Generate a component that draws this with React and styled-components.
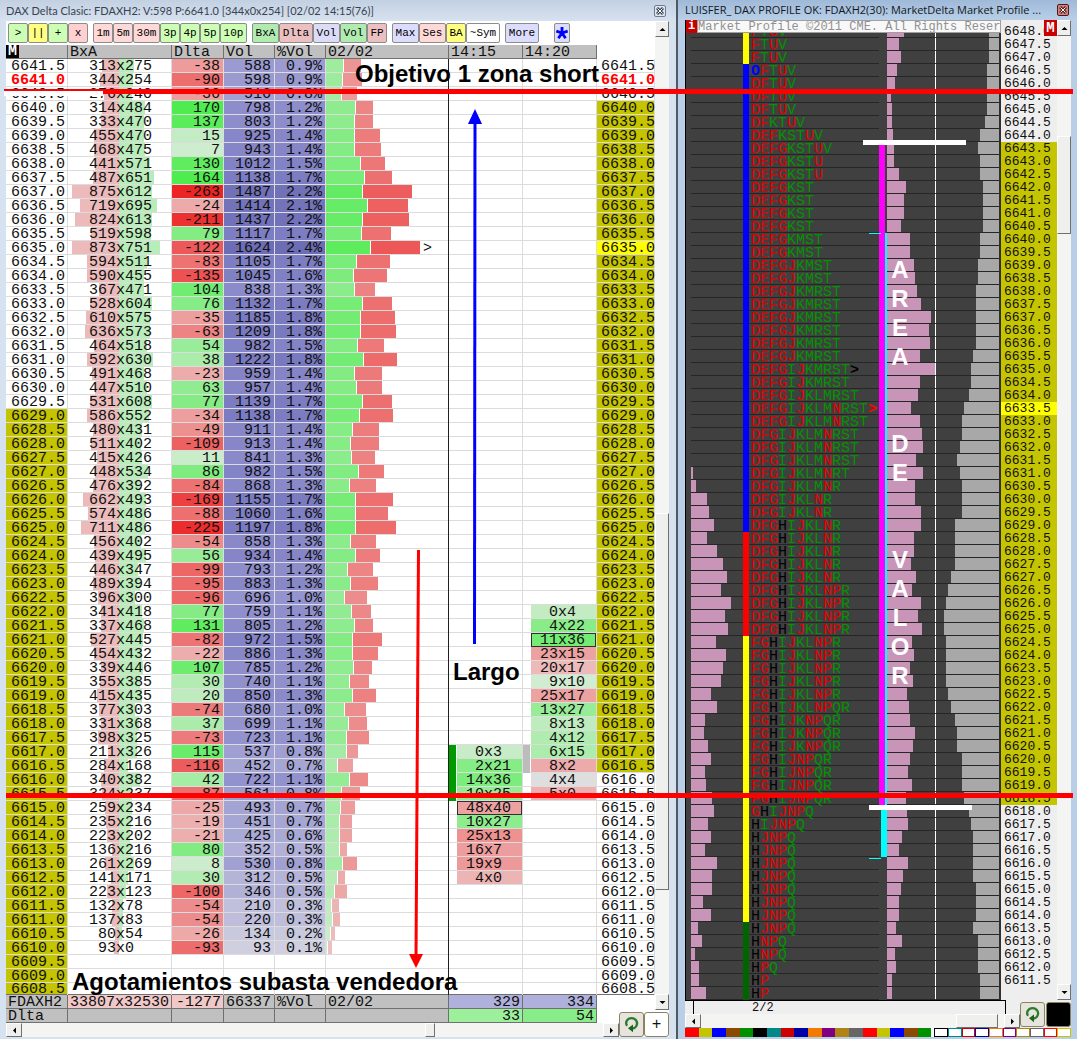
import React from 'react'
import styled, { createGlobalStyle } from 'styled-components'


const GlobalStyle = createGlobalStyle`
    * {
        box-sizing: border-box;
    }
    body {
        margin: 0;
        background: #b9cfe8;
    }
    button {
        margin: 0;
        padding: 0;
        font: inherit;
        color: inherit;
    }
`

const mono = '"Liberation Mono", "Courier New", monospace'
const olive = '#c4c400'

// price ladder, bid x ask, top price first
const LADDER_TOP = 6641.5
const TRADES = [
    [313, 275], [344, 254], [276, 240], [314, 484], [333, 470], [455, 470], [468, 475], [441, 571],
    [487, 651], [875, 612], [719, 695], [824, 613], [519, 598], [873, 751], [594, 511], [590, 455],
    [367, 471], [528, 604], [610, 575], [636, 573], [464, 518], [592, 630], [491, 468], [447, 510],
    [531, 608], [586, 552], [480, 431], [511, 402], [415, 426], [448, 534], [476, 392], [662, 493],
    [574, 486], [711, 486], [456, 402], [439, 495], [446, 347], [489, 394], [396, 300], [341, 418],
    [337, 468], [527, 445], [454, 432], [339, 446], [355, 385], [415, 435], [377, 303], [331, 368],
    [398, 325], [211, 326], [284, 168], [340, 382], [324, 237], [259, 234], [235, 216], [223, 202],
    [136, 216], [261, 269], [141, 171], [223, 123], [132, 78], [137, 83], [80, 54], [93, 0],
    null, null, null,
]
const TOTAL_VOLUME = 66337

// five minute footprints: first row they start on, then bid x ask
const FOOTPRINTS = [
    {
        start: 49, box: 53, strip: '#009a00', stripRows: 4,
        cells: [[0, 3], [2, 21], [14, 36], [10, 25], [48, 40], [10, 27], [25, 13], [16, 7], [19, 9], [4, 0]],
    },
    {
        start: 39, box: 41, strip: '#bcbcbc', stripRows: 2, stripStart: 49,
        cells: [[0, 4], [4, 22], [11, 36], [23, 15], [20, 17], [9, 10], [25, 17], [13, 27], [8, 13], [4, 12], [6, 15], [8, 2], [4, 4], [5, 0]],
    },
]

// letters, left histogram, middle histogram, right histogram
const PROFILE_TOP = 6648
const PROFILE = [
    ['FTUV', 0, 18, 10], ['FTUV', 0, 13, 10], ['FTUV', 0, 15, 10], ['OFTUV', 0, 11, 12],
    ['DFTUV', 0, 9, 12], ['DFTUV', 0, 5, 12], ['DFTUV', 0, 6, 12], ['DFKTUV', 0, 6, 14],
    ['DEFKSTUV', 0, 7, 19], ['DEFGKSTUV', 0, 8, 21], ['DEFGKSTU', 0, 8, 19], ['DEFGKSTU', 0, 13, 19],
    ['DEFGKST', 0, 20, 16], ['DEFGKST', 0, 18, 16], ['DEFGKST', 0, 18, 16], ['DEFGKST', 0, 15, 16],
    ['DEFGKMST', 0, 24, 19], ['DEFGKMST', 0, 24, 19], ['DEFGJKMST', 0, 28, 21], ['DEFGJKMST', 0, 29, 21],
    ['DEFGJKMRST', 0, 31, 23], ['DEFGJKMRST', 0, 35, 23], ['DEFGJKMRST', 0, 45, 23], ['DEFGJKMRST', 0, 43, 23],
    ['DEFGJKMRST', 0, 44, 23], ['DEFGJKMRST', 0, 34, 26], ['DEFGIJKMRST', 0, 50, 28], ['DEFGIJKMRST', 0, 34, 28],
    ['DEFGIJKLMRST', 0, 32, 30], ['DEFGIJKLMNRST', 0, 25, 35], ['DEFGIJKLMNRST', 0, 34, 37], ['DFGIJKLMNRST', 0, 36, 37],
    ['DFGIJKLMNRST', 0, 37, 39], ['DFGIJKLMNRST', 0, 30, 42], ['DFGIJKLMNRT', 2, 37, 39], ['DFGIJKLMNR', 5, 29, 37],
    ['DFGIJKLNR', 16, 29, 37], ['DFGIJKLNR', 18, 35, 37], ['DFGHIJKLNR', 23, 35, 44], ['DFGHIJKLNR', 16, 28, 44],
    ['DFGHIJKLNR', 26, 28, 44], ['DFGHIJKLNR', 32, 25, 44], ['DFGHIJKLNR', 36, 30, 48], ['DFGHIJKLNPR', 30, 26, 51],
    ['DFGHIJKLNPR', 40, 35, 53], ['DFGHIJKLNPR', 34, 32, 55], ['DFGHIJKLNPR', 37, 36, 55], ['FGHIJKLNPR', 25, 26, 53],
    ['FGHIJKLNPR', 35, 28, 53], ['FGHIJKLNPR', 32, 24, 53], ['FGHIJKLNPR', 30, 27, 53], ['FGHIJKLNPR', 20, 21, 51],
    ['FGHIJKLNPQR', 26, 23, 48], ['FGHIJKNPQR', 14, 24, 44], ['FGHIJKNPQR', 13, 29, 42], ['FGHIJKNPQR', 17, 27, 42],
    ['FGHIJNPQR', 20, 24, 37], ['FGHIJNPQR', 14, 22, 37], ['FGHIJNPQR', 15, 26, 37], ['FGHIJNPQR', 21, 20, 35],
    ['GHIJNPQ', 23, 21, 30], ['HIJNPQ', 17, 22, 28], ['HJNPQ', 20, 16, 26], ['HJNPQ', 14, 13, 26],
    ['HJNPQ', 26, 22, 26], ['HJNPQ', 21, 17, 26], ['HJNPQ', 21, 15, 23], ['HJNPQ', 12, 13, 23],
    ['HJNPQ', 20, 13, 23], ['HJNPQ', 7, 10, 26], ['HNPQ', 11, 16, 21], ['HNPQ', 4, 9, 21],
    ['HPQ', 8, 10, 21], ['HP', 8, 6, 19], ['HP', 15, 6, 19],
]

const TOOLBAR = [
    [['>', '#ccffb4'], ['||', '#ffff80'], ['+', '#ccffb4'], ['x', '#ffd0d0']],
    [['1m', '#ffd8d8'], ['5m', '#ffd8d8'], ['30m', '#ffd8d8'], ['3p', '#ccffb4'], ['4p', '#ccffb4'], ['5p', '#ccffb4'], ['10p', '#ccffb4']],
    [['BxA', '#b0ecb0'], ['Dlta', '#ecc0c0'], ['Vol', '#dcdcf8'], ['Vol', '#b0ecb0'], ['FP', '#ecc0c0']],
    [['Max', '#dcdcfc'], ['Ses', '#ffd8d8'], ['BA', '#ffff80'], ['~Sym', '#ffffff']],
    [['More', '#dcdcfc']],
]

const SWATCHES = [
    '#ff0000', '#c4c400', '#0000ff', '#8a4a00', '#009000', '#000000', '#008888', '#cc0000', '#0000a8',
    '#f47a00', '#800080', '#b08414', '#666666', '#ff0000', '#c4c400', '#0000ff', '#8a4a00', '#009000',
]
const OUTLINES = [
    '#000000', '#008888', '#cc0000', '#0000a8', '#f47a00', '#800080', '#b08414', '#666666', '#ff0000', '#c4c400',
]

// colour scales
const greenFor = n => {
    const c = Math.round(Math.max(78, 215 * Math.exp(-n / 160)))
    return `rgb(${c}, 236, ${c})`
}
const redFor = n => {
    const c = Math.round(Math.max(36, 200 * Math.exp(-n / 150)))
    return `rgb(237, ${c}, ${c})`
}
const deltaColor = d => {
    if (d === 0) return '#dedede'
    return d > 0 ? greenFor(d) : redFor(-d)
}
const volumeColor = v => {
    const c = Math.round(90 + 130 * Math.exp(-v / 850))
    return `rgb(${c}, ${c}, ${Math.round(226 - v * .028)})`
}
const letterColor = l => {
    if (l === 'H') return '#000'
    if (l === 'O') return '#0000ff'
    return 'DEFGJNPU'.includes(l) ? '#e00000' : '#009400'
}


const Page = styled.main`
    position: relative;
    display: grid;
    grid-template-columns: 678fr 399fr;
    min-height: 100vh;
    overflow: hidden;
    font-family: ${mono};
    color: #101010;
`

const Window = styled.section`
    position: relative;
    display: flex;
    flex-direction: column;
    min-width: 0;
    padding: ${props => props.$active ? '0 6px 2px 7px' : '0 7px 2px 6px'};
    background: ${props => props.$active ? '#b9cfe8' : '#d7e2f0'};
    border-right: ${props => props.$active ? 'none' : '2px solid #505862'};
`

const TitleBar = styled.header`
    display: flex;
    align-items: center;
    justify-content: space-between;
    height: ${props => props.$active ? '20px' : '21px'};
    margin: ${props => props.$active ? '0 -6px 0 -7px' : '0 -7px 0 -6px'};
    padding: ${props => props.$active ? '0 8px 0 7px' : '0 10px 0 6px'};
    background: ${props => props.$active
        ? 'linear-gradient(#9fb9d8, #b9cfe8)'
        : 'linear-gradient(#c2d0e2, #d7e2f0)'};
    h1 {
        margin: 0;
        font-family: ${props => props.$active ? '"Open Sans", sans-serif' : 'Lato, sans-serif'};
        font-size: 11px;
        font-weight: 400;
        line-height: 20px;
        white-space: nowrap;
        color: ${props => props.$active ? '#101820' : '#3a424e'};
    }
`

const CloseButton = styled.button`
    display: flex;
    flex: none;
    align-items: center;
    justify-content: center;
    width: 12px;
    height: 12px;
    border: 1px solid ${props => props.$active ? '#5a1414' : '#6e7c8e'};
    border-radius: 2px;
    background: ${props => props.$active ? '#d08484' : '#dce6f2'};
`

const Body = styled.div`
    display: flex;
    flex: 1;
    min-height: 0;
    background: #fff;
`

const Content = styled.div`
    flex: 1;
    min-width: 0;
`

const Toolbar = styled.div`
    display: flex;
    gap: 5px;
    height: 24px;
    padding: 2px 2px 0;
`

const ButtonGroup = styled.div`
    display: flex;
    &:last-child {
        margin-left: 10px;
    }
`

const ToolButton = styled.button`
    width: ${props => props.$chars < 3 ? 20 : props.$chars * 7 + 6}px;
    height: 20px;
    border: 1px solid #8c8c8c;
    border-radius: 2px;
    background: ${props => props.$color};
    font-size: 11px;
    line-height: 16px;
    color: #000;
`

const StarButton = styled(ToolButton)`
    display: flex;
    align-items: center;
    justify-content: center;
    width: 16px;
`

const Ladder = styled.table`
    width: 100%;
    table-layout: fixed;
    border-collapse: separate;
    border-spacing: 0;
    font-size: 15px;
    line-height: 12px;
    white-space: pre;
    th, td {
        height: 14px;
        padding: 2px 0 0;
        font-weight: 400;
        text-align: left;
        vertical-align: top;
        box-shadow: inset 0 -1px #dcdcdc;
    }
    thead th, tfoot td {
        padding-left: 2px;
        background: #c0c0c0;
        border-right: 1px solid #707070;
        box-shadow: inset 0 -1px #707070;
    }
    thead th:first-child {
        padding: 0;
    }
    thead th:last-child, tfoot td:last-child {
        background: #fff;
        border: none;
        box-shadow: none;
    }
    tbody tr:last-child td {
        height: 12px;
        line-height: 10px;
        box-shadow: inset 0 -1px #707070;
    }
`

const Marker = styled.span`
    display: block;
    width: 13px;
    height: 13px;
    background: #000;
    color: #fff;
    font-weight: 700;
    line-height: 14px;
    text-align: center;
`

const PriceCell = styled.td`
    && {
        padding-left: ${props => props.$right ? 4 : 5}px;
        background: ${props => props.$fill};
        border-right: 1px solid #dcdcdc;
        color: ${props => props.$last ? '#ff0000' : 'inherit'};
        font-weight: ${props => props.$last ? 700 : 400};
    }
`

const BidAskCell = styled.td`
    && {
        padding: 0;
        border-right: 1px solid #dcdcdc;
    }
`

const BidAsk = styled.div`
    display: grid;
    grid-template-columns: 51px 52px;
    i, span {
        grid-row: 1;
    }
    i {
        height: 13px;
    }
    span {
        grid-column: 1 / 3;
        padding: 2px 0 0 21px;
    }
`

const BidBar = styled.i`
    grid-column: 1;
    justify-self: end;
    background: #ecbaba;
`

const AskBar = styled.i`
    grid-column: 2;
    background: #b8ecb8;
`

const NumberCell = styled.td`
    && {
        padding-right: 3px;
        text-align: right;
        background: ${props => props.$fill};
        border-right: 1px solid #dcdcdc;
    }
`

const VolumeCell = styled.td`
    && {
        padding: 0;
        border-right: 1px solid #202020;
    }
`

const VolumeBars = styled.div`
    display: flex;
    height: 14px;
    i {
        flex: none;
        height: 13px;
        border-right: 1px solid #fff;
    }
    span {
        padding: 2px 0 0 2px;
    }
`

const FootprintCell = styled.td`
    && {
        padding: 0;
        border-right: 1px solid #dcdcdc;
    }
    > div {
        display: grid;
        grid-template-columns: 7px 1fr;
        height: 14px;
    }
`

const Strip = styled.i`
    background: ${props => props.$color || 'transparent'};
`

const Footprint = styled.span`
    margin-left: 1px;
    padding: 2px 0 0 9px;
    background: ${props => props.$fill};
    box-shadow: ${props => props.$boxed ? 'inset 0 0 0 1px #303030' : 'inset 0 -1px #dcdcdc'};
`

const SummaryCell = styled.td`
    && {
        padding-right: 2px;
        text-align: ${props => props.$align || 'left'};
        background: ${props => props.$fill};
    }
`

const ScrollTrack = styled.div`
    display: flex;
    flex: ${props => props.$vertical ? 'none' : 1};
    flex-direction: ${props => props.$vertical ? 'column' : 'row'};
    justify-content: space-between;
    width: ${props => props.$vertical ? '14px' : 'auto'};
    height: ${props => props.$vertical ? 'auto' : '14px'};
    background: #f4f4f3;
`

const ScrollArrow = styled.button`
    display: flex;
    flex: none;
    align-items: center;
    justify-content: center;
    width: ${props => props.$vertical ? 14 : 16}px;
    height: ${props => props.$vertical ? 16 : 14}px;
    border: 1px solid;
    border-color: #fff #707070 #707070 #fff;
    background: #efefee;
`

const ScrollThumb = styled.div`
    flex: none;
    border: 1px solid;
    border-color: #fff #707070 #707070 #fff;
    background: #efefee;
`

const ScrollSide = styled.div`
    display: flex;
    padding-bottom: 13px;
`

const Spacer = styled.div`
    flex: ${props => props.$grow};
`

const BottomBar = styled.footer`
    display: flex;
    align-items: flex-end;
    height: 14px;
    background: #fff;
`

const CornerButton = styled.button`
    position: relative;
    display: flex;
    flex: none;
    align-items: center;
    justify-content: center;
    width: 25px;
    height: 25px;
    border: 1px solid #8c8460;
    border-radius: 3px;
    background: ${props => props.$color || '#e6e4dc'};
`

const Chart = styled.div`
    position: relative;
    flex: 1;
    min-width: 0;
    padding-top: 5px;
    background: linear-gradient(to left, #eee 56px, #404040 56px);
    border-left: 1px solid #000;
`

const ProfileRow = styled.div`
    display: grid;
    grid-template-columns: 52px 6px 2px 1fr 8px 48px 1px 63px 2px 56px;
    height: 13px;
    padding-left: 5px;
    font-size: 15px;
    line-height: 12px;
    white-space: nowrap;
`

const Lane = styled.div`
    display: flex;
    justify-content: ${props => props.$end ? 'flex-end' : 'flex-start'};
    min-width: 0;
    height: 13px;
    border-bottom: 1px solid #262626;
`

const Bar = styled.i`
    flex: none;
    background: ${props => props.$gray ? '#a8a8a8' : '#c894b8'};
`

const SessionBar = styled.i`
    background: ${props => props.$color};
`

const Letter = styled.b`
    width: 9px;
    padding-top: 2px;
    font-weight: ${props => props.$strong ? 700 : 400};
    color: ${props => props.$color};
`

const RangeBar = styled.i`
    background: ${props => props.$fill};
`

const Divider = styled.i`
    background: ${props => props.$color};
    margin-bottom: ${props => props.$dashed ? '1px' : 0};
`

const ProfilePrice = styled.div`
    padding-left: 3px;
    background: ${props => props.$fill};
    font-size: 13px;
    line-height: 13px;
`

const Notice = styled.div`
    position: absolute;
    top: 0;
    left: 0;
    right: 57px;
    display: flex;
    height: 13px;
    font-size: 12px;
    line-height: 13px;
    white-space: nowrap;
    color: #909090;
    strong {
        flex: none;
        width: 11px;
        background: #c80000;
        color: #fff;
        text-align: center;
    }
    span {
        flex: 1;
        background: #f8f8f8;
        border: 1px solid #a0a0a0;
        line-height: 12px;
    }
`

const Badge = styled.strong`
    position: absolute;
    top: 0;
    right: 0;
    width: 13px;
    background: #c80000;
    color: #fff;
    font-size: 14px;
    line-height: 16px;
    text-align: center;
`

const Axis = styled.div`
    flex: 1;
    height: 14px;
    margin-right: 14px;
    padding-left: 67px;
    background: linear-gradient(to right, #eee 8px, #000 8px, #000 9px, #eee 9px);
    border-top: 1px solid #000;
    border-right: 1px solid #000;
    font-size: 12px;
    line-height: 14px;
`

const ChartFooter = styled.div`
    display: flex;
    align-items: flex-start;
    background: #eee;
    > div:first-child {
        flex: 1;
        min-width: 0;
    }
`

const CornerButtons = styled.div`
    display: flex;
    gap: 1px;
    padding-top: 2px;
`

const Palette = styled.div`
    display: grid;
    grid-template-columns: repeat(18, 14fr) 3fr repeat(10, 14fr);
    height: 9px;
`

const Swatch = styled.i`
    background: ${props => props.$fill};
    border: ${props => props.$line ? `1px solid ${props.$line}` : 'none'};
`

// drawn over both windows
const Level = styled.i`
    position: absolute;
    left: ${props => props.$left}px;
    right: 4px;
    top: ${props => props.$top}px;
    height: 5px;
    background: #ff0000;
`

const LevelStart = styled.i`
    position: absolute;
    left: 4px;
    top: 89px;
    width: 99px;
    height: 7px;
    background: #ff0000;
    border-bottom: 5px solid #fff;
`

const Arrow = styled.svg`
    position: absolute;
    left: ${props => props.$left}px;
    top: ${props => props.$top}px;
`

const Note = styled.p`
    position: absolute;
    left: ${props => props.$left}px;
    top: ${props => props.$top}px;
    margin: 0;
    font-family: "Liberation Sans", Arial, sans-serif;
    font-size: 24px;
    font-weight: 700;
    line-height: 28px;
    white-space: nowrap;
    color: #000;
`

const AreaText = styled.p`
    position: absolute;
    right: 145px;
    top: 235px;
    width: 24px;
    margin: 0;
    font-family: "Liberation Sans", Arial, sans-serif;
    font-size: 24px;
    font-weight: 700;
    line-height: 29px;
    text-align: center;
    color: #fff;
    span {
        display: block;
        height: 29px;
    }
`

const AreaLimit = styled.i`
    position: absolute;
    right: ${props => props.$right}px;
    top: ${props => props.$top}px;
    width: 103px;
    height: 5px;
    background: #fff;
`

const Tick = styled.i`
    position: absolute;
    right: 176px;
    top: ${props => props.$top}px;
    width: 12px;
    height: 1px;
    background: #00ffff;
`


const Triangle = ({ rotate }) => (
    <svg width='7' height='7' viewBox='0 0 7 7' aria-hidden='true'>
        <path d='M0.5 5 L3.5 2 L6.5 5 Z' fill='#000' transform={`rotate(${rotate} 3.5 3.5)`} />
    </svg>
)

const RefreshIcon = () => (
    <svg width='17' height='17' viewBox='0 0 15 15' fill='none' aria-hidden='true'>
        <path d='M3.6 8.6 C1.4 5.4 4 1.8 7.5 1.8 C11.2 1.8 13.6 5.6 11.8 8.8 C11 10.2 9.8 11 8.2 11' stroke='#2c7a2c' strokeWidth='2' />
        <path d='M8.8 7.4 V14.4 L4.4 10.9 Z' fill='#1c641c' />
    </svg>
)

const CloseIcon = ({ active }) => (
    <svg width='8' height='8' viewBox='0 0 8 8' aria-hidden='true'>
        <path d='M1 1 L7 7 M7 1 L1 7' stroke={active ? '#5a2020' : '#384250'} strokeWidth='3' />
        <path d='M1.4 1.4 L6.6 6.6 M6.6 1.4 L1.4 6.6' stroke='#fff' strokeWidth='1' />
    </svg>
)

function Title({ text, active }) {
    return (
        <TitleBar $active={active}>
            <h1>{text}</h1>
            <CloseButton type='button' aria-label='Close' $active={active}><CloseIcon active={active} /></CloseButton>
        </TitleBar>
    )
}

function Scroll({ vertical, before, after, size }) {
    const thumb = vertical ? { height: size } : { width: size }
    return (
        <ScrollTrack $vertical={vertical}>
            <ScrollArrow type='button' aria-label={vertical ? 'Scroll up' : 'Scroll left'} $vertical={vertical}>
                <Triangle rotate={vertical ? 0 : -90} />
            </ScrollArrow>
            <Spacer $grow={before} />
            <ScrollThumb style={thumb} />
            <Spacer $grow={after} />
            <ScrollArrow type='button' aria-label={vertical ? 'Scroll down' : 'Scroll right'} $vertical={vertical}>
                <Triangle rotate={vertical ? 180 : 90} />
            </ScrollArrow>
        </ScrollTrack>
    )
}

function FootprintColumn({ data, row }) {
    const trade = data.cells[row - data.start]
    const first = data.stripStart || data.start
    const hasStrip = row >= first && row < first + data.stripRows
    return (
        <FootprintCell>
            {trade &&
                <div>
                    <Strip $color={hasStrip ? data.strip : undefined} />
                    <Footprint $fill={deltaColor((trade[1] - trade[0]) * 4)} $boxed={row === data.box}>
                        {`${String(trade[0]).padStart(2)}x${trade[1]}`}
                    </Footprint>
                </div>
            }
        </FootprintCell>
    )
}

function LadderRow({ trade, row }) {
    const price = (LADDER_TOP - row / 2).toFixed(1)
    const isLast = row === 1
    let rightFill = row > 2 && row < 51 ? olive : '#fff'
    if (row === 13) rightFill = '#ffff00'

    const [bid, ask] = trade || [0, 0]
    const volume = bid + ask
    return (
        <tr>
            <PriceCell $fill={row > 24 ? olive : '#fff'} $last={isLast}>{price}</PriceCell>
            <BidAskCell>
                {trade &&
                    <BidAsk>
                        <BidBar style={{ width: Math.round(bid * .054) }} />
                        <AskBar style={{ width: Math.round(ask * .054) }} />
                        <span>{`${String(bid).padStart(3)}x${ask}`}</span>
                    </BidAsk>
                }
            </BidAskCell>
            <NumberCell $fill={trade ? deltaColor(ask - bid) : '#fff'}>{trade && ask - bid}</NumberCell>
            <NumberCell $fill={trade ? volumeColor(volume) : '#fff'}>{trade && volume}</NumberCell>
            <NumberCell $fill={trade ? volumeColor(volume) : '#fff'}>
                {trade && `${(volume / TOTAL_VOLUME * 100).toFixed(1)}%`}
            </NumberCell>
            <VolumeCell>
                {trade &&
                    <VolumeBars>
                        <i style={{ width: Math.round(ask * .0572) + 2, background: greenFor(volume / 12) }} />
                        <i style={{ width: Math.round(bid * .0572), background: redFor(volume / 13) }} />
                        {row === 13 && <span>&gt;</span>}
                    </VolumeBars>
                }
            </VolumeCell>
            <FootprintColumn data={FOOTPRINTS[0]} row={row} />
            <FootprintColumn data={FOOTPRINTS[1]} row={row} />
            <PriceCell $right $fill={rightFill} $last={isLast}>{price}</PriceCell>
        </tr>
    )
}

function DeltaWindow() {
    return (
        <Window>
            <Title text='DAX Delta Clasic: FDAXH2: V:598 P:6641.0 [344x0x254] [02/02 14:15(76)]' />
            <Body>
                <Content>
                    <Toolbar>
                        {TOOLBAR.map((group, i) => (
                            <ButtonGroup key={i}>
                                {group.map(([label, color], j) => (
                                    <ToolButton key={j} type='button' $chars={label.length} $color={color}>{label}</ToolButton>
                                ))}
                            </ButtonGroup>
                        ))}
                        <ButtonGroup>
                            <StarButton type='button' aria-label='Favourites' $color='#dcdcfc'>
                                <svg width='14' height='14' viewBox='0 0 14 14' aria-hidden='true'>
                                    <path d='M7 7 V1 M7 7 L1.3 5.2 M7 7 L12.7 5.2 M7 7 L3.4 12.2 M7 7 L10.6 12.2' stroke='#0000ff' strokeWidth='2.8' />
                                </svg>
                            </StarButton>
                        </ButtonGroup>
                    </Toolbar>
                    <Ladder>
                        <colgroup>
                            <col width='62' />
                            <col width='104' />
                            <col width='52' />
                            <col width='51' />
                            <col width='51' />
                            <col />
                            <col width='74' />
                            <col width='74' />
                            <col width='58' />
                        </colgroup>
                        <thead>
                            <tr>
                                <th><Marker>M</Marker></th>
                                <th>BxA</th>
                                <th>Dlta</th>
                                <th>Vol</th>
                                <th>%Vol</th>
                                <th>02/02</th>
                                <th>14:15</th>
                                <th>14:20</th>
                                <th></th>
                            </tr>
                        </thead>
                        <tbody>
                            {TRADES.map((trade, row) => <LadderRow key={row} trade={trade} row={row} />)}
                        </tbody>
                        <tfoot>
                            <tr>
                                <td>FDAXH2</td>
                                <SummaryCell $fill='#f0c8c8'>33807x32530</SummaryCell>
                                <SummaryCell $fill='#f0c8c8' $align='right'>-1277</SummaryCell>
                                <td>66337</td>
                                <td>%Vol</td>
                                <td>02/02</td>
                                <SummaryCell $fill='#b0b0dc' $align='right'>329</SummaryCell>
                                <SummaryCell $fill='#b0b0dc' $align='right'>334</SummaryCell>
                                <td></td>
                            </tr>
                            <tr>
                                <td>Dlta</td>
                                <td></td>
                                <td></td>
                                <td></td>
                                <td></td>
                                <td></td>
                                <SummaryCell $fill='#9cf09c' $align='right'>33</SummaryCell>
                                <SummaryCell $fill='#88ec88' $align='right'>54</SummaryCell>
                                <td></td>
                            </tr>
                        </tfoot>
                    </Ladder>
                </Content>
                <ScrollSide>
                    <Scroll vertical before={476} after={104} size={377} />
                </ScrollSide>
            </Body>
            <BottomBar>
                <Scroll before={402} after={168} size={10} />
                <CornerButton type='button' aria-label='Refresh'><RefreshIcon /></CornerButton>
                <CornerButton type='button' aria-label='Add' $color='#fff'>+</CornerButton>
            </BottomBar>
        </Window>
    )
}

// colour of the session strip next to the letters
const sessionColor = row => {
    if (row < 3) return '#ffff00'
    if (row < 39) return '#0000ff'
    if (row < 47) return '#ff0000'
    return row < 69 ? '#ffff00' : '#006400'
}

const rangeFill = row => {
    if (row < 9 || row > 63) return 'transparent'
    if (row < 16) return 'linear-gradient(to right, #ff00ff 6px, #404040 6px)'
    if (row < 60) return 'linear-gradient(to right, #ff00ff 6px, #00ffff 6px)'
    return 'linear-gradient(to right, #404040 2px, #00ffff 2px)'
}

function ProfileLine({ data, row }) {
    const [letters, left, middle, right] = data
    let fill = row > 8 && row < 60 ? olive : '#eee'
    if (row === 29) fill = '#ffff00'
    return (
        <ProfileRow>
            <Lane><Bar style={{ width: left }} /></Lane>
            <SessionBar $color={sessionColor(row)} />
            <Lane />
            <Lane>
                {letters.split('').map(l => (
                    <Letter key={l} $color={letterColor(l)} $strong={l === 'O'}>{l}</Letter>
                ))}
                {row === 26 && <Letter $color='#000' $strong>&gt;</Letter>}
                {row === 29 && <Letter $color='#ff0000' $strong>&gt;</Letter>}
            </Lane>
            <RangeBar $fill={rangeFill(row)} />
            <Lane><Bar style={{ width: middle - 1 }} /></Lane>
            <Divider $color='#fff' $dashed />
            <Lane $end><Bar $gray style={{ width: right }} /></Lane>
            <Divider $color='#303030' />
            <ProfilePrice $fill={fill}>{row < 74 && (PROFILE_TOP - row / 2).toFixed(1)}</ProfilePrice>
        </ProfileRow>
    )
}

function ProfileWindow() {
    return (
        <Window $active>
            <Title active text='LUISFER_ DAX PROFILE OK: FDAXH2(30): MarketDelta Market Profile ...' />
            <Body>
                <Chart>
                    {PROFILE.map((data, row) => <ProfileLine key={row} data={data} row={row} />)}
                    <Notice>
                        <strong>i</strong>
                        <span>Market Profile ©2011 CME. All Rights Reser</span>
                    </Notice>
                    <Badge>M</Badge>
                    <Tick $top={213} />
                    <Tick $top={838} />
                    <AreaLimit $right={91} $top={120} />
                    <AreaLimit $right={85} $top={785} />
                    <AreaText>
                        {'AREA  DE  VALOR'.split('').map((l, i) => <span key={i}>{l}</span>)}
                    </AreaText>
                </Chart>
                <Scroll vertical before={100} after={752} size={98} />
            </Body>
            <ChartFooter>
                <div>
                    <Axis>2/2</Axis>
                    <Scroll before={256} after={6} size={42} />
                </div>
                <CornerButtons>
                    <CornerButton type='button' aria-label='Refresh'><RefreshIcon /></CornerButton>
                    <CornerButton type='button' aria-label='Background' $color='#000' />
                </CornerButtons>
            </ChartFooter>
            <Palette>
                {SWATCHES.map((color, i) => <Swatch key={i} $fill={color} />)}
                <Swatch $fill='#fff' />
                {OUTLINES.map((color, i) => <Swatch key={i} $fill='#fff' $line={color} />)}
            </Palette>
        </Window>
    )
}

export default function App() {
    return (
        <>
            <GlobalStyle />
            <Page>
                <DeltaWindow />
                <ProfileWindow />

                <Note $left={355} $top={60}>Objetivo 1 zona short</Note>
                <Note $left={453} $top={658}>Largo</Note>
                <Note $left={72} $top={968}>Agotamientos subasta vendedora</Note>
                <Arrow $left={468} $top={109} width='14' height='535'>
                    <path d='M7 10 L6.5 535' stroke='#0000ff' strokeWidth='3' />
                    <path d='M7 0 L14 15 H0 Z' fill='#0000ff' />
                </Arrow>
                <Arrow $left={409} $top={550} width='14' height='418'>
                    <path d='M9.5 0 L7 410' stroke='#ff0000' strokeWidth='3' />
                    <path d='M7 418 L14 404 H0 Z' fill='#ff0000' />
                </Arrow>
                <LevelStart />
                <Level $left={103} $top={89} />
                <Level $left={6} $top={793} />
            </Page>
        </>
    )
}
